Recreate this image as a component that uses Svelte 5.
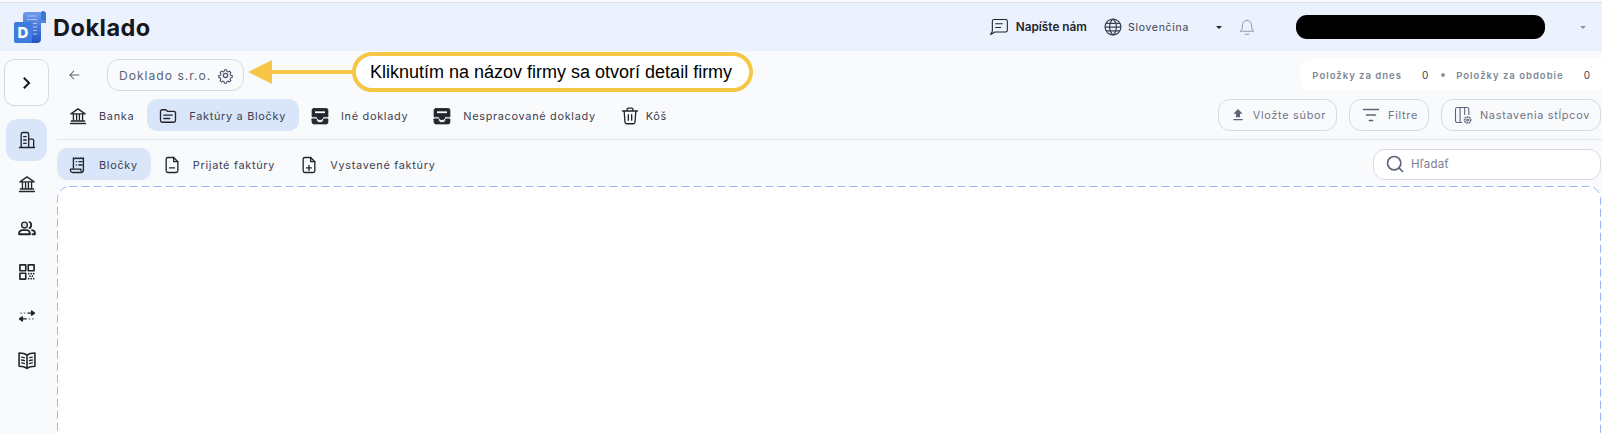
<script lang="ts">
	const tabs = [
		{ label: 'Banka', icon: 'bank' },
		{ label: 'Faktúry a Bločky', icon: 'folder', active: true },
		{ label: 'Iné doklady', icon: 'inbox' },
		{ label: 'Nespracované doklady', icon: 'inbox' },
		{ label: 'Kôš', icon: 'trash' }
	];
	const subTabs = [
		{ label: 'Bločky', icon: 'receipt', active: true },
		{ label: 'Prijaté faktúry', icon: 'fileMinus' },
		{ label: 'Vystavené faktúry', icon: 'filePlus' }
	];
	const sideItems = [
		{ icon: 'building', active: true },
		{ icon: 'bank' },
		{ icon: 'people' },
		{ icon: 'qr' },
		{ icon: 'swap' },
		{ icon: 'book' }
	];
</script>

{#snippet icon(name: string)}
	<svg class="icon" viewBox="0 0 24 24" fill="none" stroke="currentColor" stroke-width="1.600" stroke-linecap="round" stroke-linejoin="round">
		{#if name === 'bank'}
			<path d="M3 21h18M4 18h16M3.500 9.500 12 3.500l8.500 6ZM3.500 9.500h17M6.500 10v8M10.300 10v8M13.700 10v8M17.500 10v8" />
		{:else if name === 'folder'}
			<path d="M3 6.500a2 2 0 0 1 2-2h4.500l2 2H19a2 2 0 0 1 2 2v9a2 2 0 0 1-2 2H5a2 2 0 0 1-2-2Z" />
			<path d="M7 11h10M7 15h7" />
		{:else if name === 'inbox'}
			<path d="M4.500 3h15A2 2 0 0 1 21.500 5v8h-6a3.500 3.500 0 0 1-7 0h-6V5a2 2 0 0 1 2-2Z" fill="currentColor" stroke-width="1" />
			<path d="M6 7.500h12" stroke="#f9fafc" stroke-width="2.200" stroke-linecap="butt" />
			<path d="M2.500 15.500h5a4.500 4.500 0 0 0 9 0h5V19.500a2 2 0 0 1-2 2h-15a2 2 0 0 1-2-2Z" fill="currentColor" stroke-width="1" />
		{:else if name === 'trash'}
			<path d="M3 6h18M8.500 5.500V4a1.500 1.500 0 0 1 1.500-1.500h4A1.500 1.500 0 0 1 15.500 4v1.500M5 6l1 13.500a2 2 0 0 0 2 1.800h8a2 2 0 0 0 2-1.800L19 6M10 10.500v6.500M14 10.500v6.500" />
		{:else if name === 'receipt'}
			<path d="M6.500 17V3.500l1.500 1 1.500-1 1.500 1 1.500-1 1.500 1 1.500-1 1.500 1 1.500-1V18a3 3 0 0 1-3 3H5.500A2.500 2.500 0 0 1 3 18.500V17h12.500v2" />
			<path d="M10 8h.01M13 8h4M10 12h.01M13 12h4" />
		{:else if name === 'fileMinus'}
			<path d="M14 3H7a2 2 0 0 0-2 2v14a2 2 0 0 0 2 2h10a2 2 0 0 0 2-2V8Z" />
			<path d="M14 3v5h5M9 15.500h6" />
		{:else if name === 'filePlus'}
			<path d="M14 3H7a2 2 0 0 0-2 2v14a2 2 0 0 0 2 2h10a2 2 0 0 0 2-2V8Z" />
			<path d="M14 3v5h5M9 15.500h6M12 12.500v6" />
		{:else if name === 'building'}
			<path d="M3 21h18M5 21V5a2 2 0 0 1 2-2h5a2 2 0 0 1 2 2v16M14 11h4.500a1.500 1.500 0 0 1 1.500 1.500V21M8 8h3M8 12h3M8 16h3" />
		{:else if name === 'people'}
			<circle cx="9" cy="8.500" r="3.500" fill="currentColor" fill-opacity=".15" />
			<path d="M2.500 19.500V18.500A4 4 0 0 1 6.500 14.500h5a4 4 0 0 1 4 4v1ZM15 5c2.600.4 2.600 6.600 0 7M18 14.500a4 4 0 0 1 3.500 4v1h-3" stroke-width="2.200" />
		{:else if name === 'qr'}
			<path d="M3.500 3.500h7v7h-7ZM13.500 3.500h7v7h-7ZM3.500 13.500h7v7h-7Z" stroke-width="2" />
			<path d="M14 14h.01M17 14h.01M20 14h.01M15.500 17h.01M18.500 17h.01M14 20h.01M17 20h.01M20 20h.01" stroke-width="2" />
		{:else if name === 'swap'}
			<path d="M4 8.500h2M8 8.500h2M14 15.500h2M18 15.500h2" stroke-opacity="0.45" stroke-width="2" stroke-linecap="butt" />
			<path d="M13 8.500h6M17.500 6l3.500 2.500-3.500 2.500Z" fill="currentColor" />
			<path d="M5 15.500h6M6.500 13l-3.500 2.500 3.500 2.500Z" fill="currentColor" />
		{:else if name === 'book'}
			<path d="M12 6C10 4.500 6 3.500 2.500 3.500v16c3.500 0 7.500 1 9.500 2.500 2-1.500 6-2.500 9.500-2.500v-16C18 3.500 14 4.500 12 6ZM12 6v16" stroke-width="1.900" />
			<path d="M5.500 8.500c1.200.1 2.500.4 3.500.8M5.500 12c1.200.1 2.500.4 3.500.8M5.500 15.500c1.200.1 2.500.4 3.500.8M18.500 8.500c-1.200.1-2.500.4-3.500.8M18.500 12c-1.200.1-2.500.4-3.500.8M18.500 15.500c-1.200.1-2.500.4-3.500.8" />
		{/if}
	</svg>
{/snippet}

<div class="page">
	<header class="topbar">
		<div class="brand">
			<svg class="logo" viewBox="0 0 32 32">
				<defs>
					<linearGradient id="scroll" x1="0" y1="0" x2="0" y2="1">
						<stop offset="0" stop-color="#6f9bee" />
						<stop offset="1" stop-color="#1f55c4" />
					</linearGradient>
				</defs>
				<path d="M9 4a3 3 0 0 1 3-3h17a3 3 0 0 1 3 3v8h-5v16a4 4 0 0 1-4 4H5V12h4Z" fill="url(#scroll)" />
				<path d="M27 1a3 3 0 0 1 5 3v5h-5Z" fill="#3a72dc" />
				<path d="M13 5h10M13 8.500h10M19 12.500h4M19 16h4M19 19.500h4M19 23h4" stroke="#a9c4f5" stroke-width="1.200" />
				<rect x="0" y="11" width="18" height="21" rx="2" fill="#3f7ce0" />
				<text x="9" y="27" class="logo-d">D</text>
			</svg>
			<span class="brand-name">Doklado</span>
		</div>
		<div class="top-actions">
			<span class="top-item">
				<svg class="top-icon" viewBox="0 0 24 24" fill="none" stroke="currentColor" stroke-width="1.300" stroke-linecap="round" stroke-linejoin="round">
					<path d="M4 5a2 2 0 0 1 2-2h14a2 2 0 0 1 2 2v11a2 2 0 0 1-2 2H7l-5 3 2-4ZM8 8h8M8 12.500h6" />
				</svg>
				<strong>Napíšte nám</strong>
			</span>
			<span class="top-item lang">
				<svg class="top-icon" viewBox="0 0 24 24" fill="none" stroke="currentColor" stroke-width="1.500">
					<circle cx="12" cy="12" r="9.500" />
					<path d="M2.500 12h19M3.500 7.500h17M3.500 16.500h17M12 2.500c-5.500 5-5.500 14 0 19M12 2.500c5.500 5 5.500 14 0 19" />
				</svg>
				<span>Slovenčina</span>
			</span>
			<span class="caret dark"></span>
			<svg class="bell" viewBox="0 0 24 24" fill="none" stroke="#8a8f9c" stroke-width="1.200" stroke-linecap="round" stroke-linejoin="round">
				<path d="M12 2.500a6 6 0 0 0-6 6c0 5-1 7-3 8.500h18c-2-1.500-3-3.500-3-8.500a6 6 0 0 0-6-6ZM9.500 21h5" />
			</svg>
			<span class="redacted"></span>
			<span class="caret"></span>
		</div>
	</header>

	<div class="body">
		<nav class="sidebar">
			<button class="collapse" type="button" aria-label="Rozbaliť">
				<svg viewBox="0 0 24 24" width="24" height="24"><path d="M9.500 6 8.100 7.400 12.700 12l-4.600 4.600L9.500 18l6-6z" fill="#16181d" /></svg>
			</button>
			<div class="side-list">
				{#each sideItems as item}
					<span class="side-item" class:active={item.active}>{@render icon(item.icon)}</span>
				{/each}
			</div>
		</nav>

		<main class="content">
			<div class="row-company">
				<svg class="back" viewBox="0 0 24 24"><path d="M20 11.300H7.500l5-5-1-1L4.800 12l6.700 6.700 1-1-5-5H20z" fill="#5b6478" /></svg>
				<div class="company">
					<span>Doklado s.r.o.</span>
					<svg viewBox="0 0 24 24" width="17" height="17" fill="none" stroke="#4a5266" stroke-width="1.800" stroke-linejoin="round">
						<path d="M10.300 2.800h3.400l.6 2.700 2 .9 2.400-1.400 2.300 2.400-1.400 2.300.9 2.100 2.700.6v3.200l-2.700.6-.9 2.100 1.400 2.300-2.300 2.300-2.400-1.400-2 .9-.6 2.700h-3.400l-.6-2.700-2-.9-2.400 1.400-2.300-2.300 1.400-2.300-.9-2.100-2.700-.6v-3.200l2.700-.6.900-2.100-1.400-2.300 2.300-2.400 2.400 1.400 2-.9Z" transform="translate(1.800 1.600) scale(.85)" />
						<circle cx="12" cy="12" r="3" />
					</svg>
				</div>
				<div class="stats">
					<span class="stat-label">Položky za dnes</span>
					<span class="stat-value">0</span>
					<span class="stat-dot"></span>
					<span class="stat-label">Položky za obdobie</span>
					<span class="stat-value">0</span>
				</div>
			</div>

			<div class="row-tabs">
				{#each tabs as tab}
					<span class="tab" class:active={tab.active}>{@render icon(tab.icon)}{tab.label}</span>
				{/each}
				<div class="tools">
					<button class="tool" type="button">
						<svg viewBox="0 0 24 24" width="16" height="16"><path d="M9 15.500h6V10h4l-7-7-7 7h4zM5 18h14v2H5z" fill="#5b6478" /></svg>
						Vložte súbor
					</button>
					<button class="tool" type="button">
						<svg viewBox="0 0 24 24" width="20" height="20" fill="none" stroke="#5b6478" stroke-width="1.800" stroke-linecap="round"><path d="M3 5.500h18M6.500 12h11M10 18.500h4" /></svg>
						Filtre
					</button>
					<button class="tool" type="button">
						<svg viewBox="0 0 24 24" width="20" height="20" fill="none" stroke="#5b6478" stroke-width="1.300" stroke-linejoin="round">
							<path d="M11 21H5a2 2 0 0 1-2-2V5a2 2 0 0 1 2-2h12a2 2 0 0 1 2 2v7M8.500 3v18M14 3v9" />
							<circle cx="17.500" cy="18" r="3.600" stroke-width="2" stroke-dasharray="1.800 .8" />
							<circle cx="17.500" cy="18" r="1" />
						</svg>
						Nastavenia stĺpcov
					</button>
				</div>
			</div>

			<div class="row-sub">
				{#each subTabs as tab}
					<span class="tab" class:active={tab.active}>{@render icon(tab.icon)}{tab.label}</span>
				{/each}
				<label class="search">
					<svg viewBox="0 0 24 24" width="20" height="20" fill="none" stroke="#5b6478" stroke-width="2" stroke-linecap="round"><circle cx="11" cy="11" r="8" /><path d="m17 17 4 4" /></svg>
					<input type="text" placeholder="Hľadať" />
				</label>
			</div>

			<div class="dropzone">
				<svg class="dash" aria-hidden="true"><rect x=".5" y=".5" rx="12" /></svg>
			</div>
		</main>
	</div>

	<div class="callout">
		<svg class="arrow" viewBox="0 0 106 26" width="106" height="26"><path d="M24 11h82v4H24z M0 13 24 1v24z" fill="#f6c746" /></svg>
		<div class="bubble">Kliknutím na názov firmy sa otvorí detail firmy</div>
	</div>
</div>

<style>
	:global(body) {
		margin: 0;
		overflow: hidden;
		background: #f9fafc;
	}

	.page {
		position: relative;
		height: 434px;
		overflow: hidden;
		font-family: Inter, "Liberation Sans", sans-serif;
		font-size: 10.9px;
		letter-spacing: 0.7px;
		color: #3c4150;
	}

	.topbar {
		display: flex;
		align-items: center;
		justify-content: space-between;
		height: 48px;
		margin-top: 3px;
		background: #ebf1fd;
		box-shadow: 0 -1px 0 #dfe2e6;
	}

	.brand {
		display: flex;
		align-items: center;
		gap: 7px;
		padding-left: 14px;
	}

	.logo {
		width: 32px;
		height: 32px;
	}

	.logo-d {
		fill: #fff;
		font-size: 15px;
		font-weight: 800;
		text-anchor: middle;
		letter-spacing: 0;
	}

	.brand-name {
		font-size: 23.5px;
		font-weight: 700;
		letter-spacing: 0.5px;
		color: #16181d;
	}

	.top-actions {
		display: flex;
		align-items: center;
		color: #22252c;
	}

	.top-item {
		display: flex;
		align-items: center;
		gap: 7px;
	}

	.top-icon {
		width: 20px;
		height: 20px;
		flex-shrink: 0;
	}

	.top-item strong {
		font-size: 11.8px;
		font-weight: 600;
		letter-spacing: 0;
	}

	.lang {
		margin-left: 16px;
		gap: 5px;
		color: #3c4150;
		font-size: 10.5px;
	}

	.caret {
		width: 0;
		height: 0;
		margin-left: 27px;
		border: 3px solid transparent;
		border-top: 3px solid #8d93a0;
		border-bottom: 0;
	}

	.caret.dark {
		border-top-color: #22252c;
	}

	.bell {
		width: 18px;
		height: 19px;
		margin-left: 16px;
	}

	.redacted {
		width: 249px;
		height: 24px;
		margin-left: 40px;
		border-radius: 11px;
		background: #000;
	}

	.top-actions .caret:last-child {
		margin: 0 16px 0 35px;
	}

	.body {
		display: flex;
	}

	.sidebar {
		width: 57px;
		flex-shrink: 0;
		padding: 8px 0 0 4px;
		box-sizing: border-box;
	}

	.collapse {
		display: flex;
		align-items: center;
		justify-content: center;
		width: 45px;
		height: 47px;
		padding: 0;
		border: 1px solid #d6d9e0;
		border-radius: 10px;
		background: #fbfcfd;
	}

	.side-list {
		display: flex;
		flex-direction: column;
		gap: 2px;
		margin: 13px 0 0 2px;
	}

	.side-item {
		display: flex;
		align-items: center;
		justify-content: center;
		width: 41px;
		height: 42px;
		border-radius: 12px;
		color: #262a33;
	}

	.side-item.active {
		background: #d9e5f8;
	}

	.content {
		flex: 1;
		min-width: 0;
	}

	.row-company {
		display: flex;
		align-items: center;
		height: 32px;
		margin-top: 8px;
	}

	.back {
		width: 16px;
		height: 16px;
		margin-left: 9px;
	}

	.company {
		display: flex;
		align-items: center;
		gap: 6px;
		height: 30px;
		margin-left: 25px;
		padding: 0 9px 0 11px;
		border: 1px solid #d6d9e0;
		border-radius: 12px;
		font-size: 12.1px;
		letter-spacing: 1px;
		color: #5b6275;
	}

	.stats {
		display: flex;
		align-items: center;
		height: 32px;
		margin-left: auto;
		padding: 0 11px 0 12px;
		border-radius: 12px 0 0 12px;
		background: #fff;
		font-size: 9.5px;
		font-weight: 600;
		letter-spacing: 1px;
	}

	.stat-label {
		color: #808694;
	}

	.stat-value {
		margin-left: 20px;
		font-size: 10px;
		font-weight: 400;
		color: #3c4150;
	}

	.stat-dot {
		width: 4px;
		height: 4px;
		margin: 0 11px 0 12px;
		border-radius: 50%;
		background: #8d93a0;
	}

	.row-tabs {
		display: flex;
		align-items: center;
		height: 32px;
		margin-top: 8px;
		padding: 0 1px 8px 0;
		border-bottom: 1px solid #dfe2ea;
	}

	.row-sub {
		display: flex;
		align-items: center;
		height: 32px;
		margin-top: 8px;
		padding-right: 1px;
	}

	.tab {
		display: flex;
		align-items: center;
		gap: 11px;
		height: 32px;
		padding: 1px 13px 0 11px;
		border-radius: 10px;
		box-sizing: border-box;
		white-space: nowrap;
	}

	.tab:nth-child(5) {
		gap: 6px;
	}

	.tab.active {
		background: #d9e5f8;
	}

	.icon {
		width: 20px;
		height: 20px;
		flex-shrink: 0;
		color: #22252c;
	}

	.tools {
		display: flex;
		gap: 12px;
		margin-left: auto;
	}

	.tool {
		display: flex;
		align-items: center;
		gap: 7px;
		height: 32px;
		padding: 0 10px 0 11px;
		border: 1px solid #d6d9e0;
		border-radius: 12px;
		background: transparent;
		font: inherit;
		letter-spacing: inherit;
		color: #6f7586;
	}

	.search {
		display: flex;
		align-items: center;
		gap: 6px;
		width: 228px;
		height: 31px;
		margin-left: auto;
		padding: 0 11px;
		border: 1px solid #d6d9e0;
		border-radius: 12px;
		background: #fff;
		box-sizing: border-box;
	}

	.search input {
		flex: 1;
		min-width: 0;
		padding: 0;
		border: 0;
		outline: 0;
		background: transparent;
		font: inherit;
		font-size: 11.5px;
		letter-spacing: 0.2px;
	}

	.search input::placeholder {
		color: #7a8090;
	}

	.dropzone {
		position: relative;
		height: 280px;
		margin: 6px 1px 0 0;
		border-radius: 12px;
		background: #fff;
	}

	.dash {
		position: absolute;
		inset: 0;
		width: 100%;
		height: 100%;
	}

	.dash rect {
		width: calc(100% - 1px);
		height: calc(100% - 1px);
		fill: none;
		stroke: #9db5f8;
		stroke-width: 1;
		stroke-dasharray: 8 4;
	}

	.callout {
		position: absolute;
		top: 52px;
		left: 248px;
		display: flex;
		align-items: center;
	}

	.arrow {
		margin-right: -2px;
	}

	.bubble {
		height: 40px;
		padding: 0 17px 0 14px;
		border: 4px solid #f6c746;
		border-radius: 20px;
		background: #fff;
		box-sizing: border-box;
		font-family: "Liberation Sans", Arial, sans-serif;
		font-size: 18px;
		line-height: 32px;
		letter-spacing: 0;
		color: #000;
		white-space: nowrap;
	}
</style>
